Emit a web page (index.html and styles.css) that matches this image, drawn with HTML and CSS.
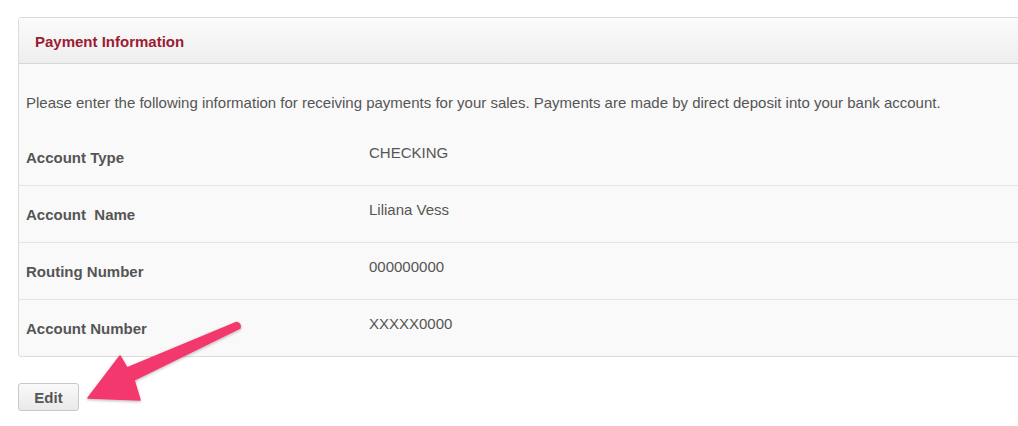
FILE: index.html
```html
<!DOCTYPE html>
<html>
<head>
<meta charset="utf-8">
<link rel="stylesheet" href="styles.css">
</head>
<body>
<div class="page">
  <section class="panel">
    <header class="panel-head">Payment Information</header>
    <div class="panel-body">
      <p class="intro">Please enter the following information for receiving payments for your sales. Payments are made by direct deposit into your bank account.</p>
      <div class="row">
        <div class="label">Account Type</div>
        <div class="value">CHECKING</div>
      </div>
      <div class="row">
        <div class="label">Account&nbsp; Name</div>
        <div class="value">Liliana Vess</div>
      </div>
      <div class="row">
        <div class="label">Routing Number</div>
        <div class="value">000000000</div>
      </div>
      <div class="row last">
        <div class="label">Account Number</div>
        <div class="value">XXXXX0000</div>
      </div>
    </div>
  </section>
  <div class="actions">
    <button class="btn">Edit</button>
  </div>
</div>
<svg class="arrow" width="1018" height="426" viewBox="0 0 1018 426">
  <defs>
    <filter id="sh" x="-20%" y="-20%" width="140%" height="140%">
      <feDropShadow dx="0" dy="1" stdDeviation="1.5" flood-color="#000" flood-opacity="0.3"/>
    </filter>
  </defs>
  <path d="M236.5 322.5 Q241 323 240 328 L134 380 L140 400 L88 398 L120 356 L127 368 Z" fill="#f2386c" stroke="#f2386c" stroke-width="1.5" stroke-linejoin="round" filter="url(#sh)"/>
</svg>
</body>
</html>
```
FILE: styles.css
```css
html, body {
  margin: 0;
  padding: 0;
  background: #ffffff;
  overflow: hidden;
}
body {
  width: 1018px;
  height: 426px;
  font-family: "Liberation Sans", Arial, Helvetica, sans-serif;
  font-size: 15px;
  color: #555555;
  position: relative;
}
.page {
  padding: 17px 0 0 18px;
}
.panel {
  width: 1030px;
  border: 1px solid #dcdcdc;
  border-radius: 3px;
  background: #f9f9f9;
}
.panel-head {
  height: 44px;
  display: flex;
  align-items: center;
  padding-left: 16px;
  padding-top: 1px;
  font-weight: bold;
  color: #9b1c33;
  background: linear-gradient(#fbfbfb, #eeeeee);
  border-bottom: 1px solid #d6d6d6;
  line-height: 17px;
}
.panel-body {
  padding: 0 0 0 7px;
}
.intro {
  margin: 0;
  padding: 30px 0 18px 0;
  line-height: 17px;
}
.row {
  display: grid;
  grid-template-columns: 343px 1fr;
  height: 56px;
  border-bottom: 1px solid #e4e4e4;
  margin-left: -7px;
  padding-left: 7px;
}
.row.last {
  border-bottom: none;
}
.label {
  font-weight: bold;
  padding-top: 20px;
  line-height: 17px;
}
.value {
  padding-top: 15px;
  line-height: 17px;
}
.actions {
  padding-top: 26px;
}
.btn {
  width: 61px;
  height: 28px;
  border: 1px solid #c8c8c8;
  border-radius: 3px;
  background: linear-gradient(#fafafa, #e9e9e9);
  font-family: "Liberation Sans", Arial, Helvetica, sans-serif;
  font-size: 15px;
  font-weight: bold;
  color: #555555;
  padding: 0;
}
.arrow {
  position: absolute;
  left: 0;
  top: 0;
  pointer-events: none;
}
```
